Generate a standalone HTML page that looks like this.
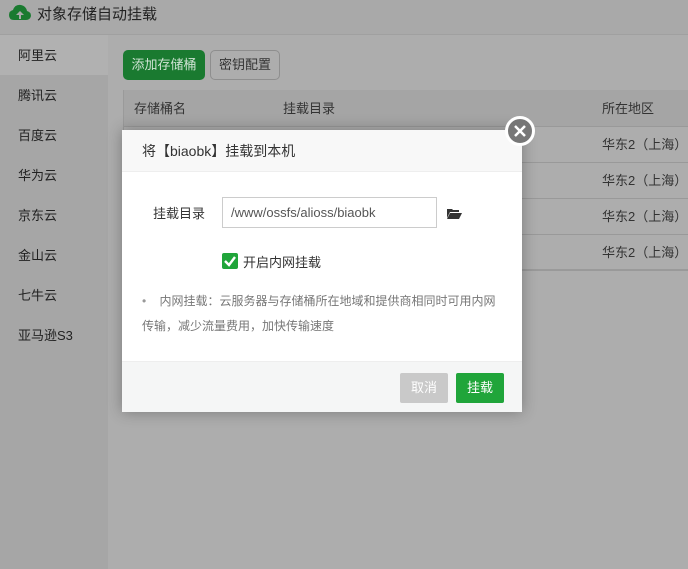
<!DOCTYPE html><html><head><meta charset="utf-8"><style>
*{margin:0;padding:0;box-sizing:border-box}
body{width:688px;height:569px;overflow:hidden;position:relative;background:#adadad;font-family:"Liberation Sans","Noto Sans CJK SC",sans-serif;font-size:13px;color:#333}
.a{position:absolute}
.top{left:0;top:0;width:688px;height:35px;background:#a9a9a9;border-bottom:1px solid #a0a0a0}
.side{left:0;top:35px;width:108px;height:534px;background:#a6a6a6}
.si{position:absolute;left:18px;font-size:13px;color:#222}
.tab{left:123px;top:90px;width:565px;height:180px;border:1px solid #9a9a9a;border-right:none}
.row{position:absolute;left:0;width:565px;height:36px;border-top:1px solid #999}
.t{position:absolute;font-size:13px;color:#333}
</style></head><body>
<div class="a top"></div>
<svg class="a" style="left:9px;top:4px" width="22" height="18" viewBox="0 0 22 18"><path d="M5 16 Q0 16 0 11 Q0 7 4 6 Q6 0 12 1 Q17 2 18 7 Q22 8 22 12 Q21 16 17 16Z" fill="#1a7a30"/><path d="M11 7 L7 11 H10 V15 H12 V11 H15Z" fill="#a9a9a9"/></svg>
<div class="a" style="left:37px;top:3px;font-size:15px;color:#222">对象存储自动挂载</div>
<div class="a side"></div>
<div class="a" style="left:0;top:35px;width:108px;height:40px;background:#b1b1b1"></div>
<div class="si" style="top:45px">阿里云</div>
<div class="si" style="top:85px">腾讯云</div>
<div class="si" style="top:125px">百度云</div>
<div class="si" style="top:165px">华为云</div>
<div class="si" style="top:205px">京东云</div>
<div class="si" style="top:245px">金山云</div>
<div class="si" style="top:285px">七牛云</div>
<div class="si" style="top:325px">亚马逊S3</div>
<div class="a" style="left:123px;top:50px;width:82px;height:30px;background:#1a7a30;border-radius:5px;color:#cfe3d3;text-align:center;line-height:30px">添加存储桶</div>
<div class="a" style="left:210px;top:50px;width:70px;height:30px;border:1px solid #8e8e8e;border-radius:5px;color:#333;text-align:center;line-height:28px">密钥配置</div>
<div class="a tab">
<div class="row" style="top:-1px;height:36px;background:#a5a5a5;border-top:none"></div>
<div class="t" style="left:10px;top:7px">存储桶名</div><div class="t" style="left:159px;top:7px">挂载目录</div><div class="t" style="left:478px;top:7px">所在地区</div>
<div class="row" style="top:35px"><div class="t" style="left:478px;top:7px">华东2（上海）</div></div>
<div class="row" style="top:71px"><div class="t" style="left:478px;top:7px">华东2（上海）</div></div>
<div class="row" style="top:107px"><div class="t" style="left:478px;top:7px">华东2（上海）</div></div>
<div class="row" style="top:143px;height:37px;border-bottom:1px solid #999"><div class="t" style="left:478px;top:7px">华东2（上海）</div></div>
</div>
<div class="a" style="left:122px;top:130px;width:400px;height:282px;background:#fff;box-shadow:0 0 14px rgba(0,0,0,.3)">
<div class="a" style="left:0;top:0;width:400px;height:42px;background:#f8f8f8;border-bottom:1px solid #eee"></div>
<div class="a" style="left:20px;top:11px;font-size:14px;color:#333">将【biaobk】挂载到本机</div>
<div class="a" style="left:31px;top:73px;color:#333">挂载目录</div>
<div class="a" style="left:100px;top:67px;width:215px;height:31px;border:1px solid #ccc;padding-left:8px;line-height:29px;color:#555">/www/ossfs/alioss/biaobk</div>
<svg class="a" style="left:325px;top:78px" width="15" height="11" viewBox="0 0 15 11"><path d="M0 1 H5 L6 2 H12 V4 H3 L0 10Z M3 5 H15 L12 11 H0Z" fill="#333"/></svg>
<div class="a" style="left:100px;top:123px;width:16px;height:16px;background:#20a53a;border-radius:2px"><svg width="16" height="16"><path d="M3 8 L7 12 L13 4" stroke="#fff" stroke-width="2.4" fill="none"/></svg></div>
<div class="a" style="left:121px;top:122px;color:#333">开启内网挂载</div>
<div class="a" style="left:20px;top:159px;width:360px;font-size:12px;color:#777;line-height:25px"><span style="color:#999;margin-right:10px">•</span> 内网挂载：云服务器与存储桶所在地域和提供商相同时可用内网传输，减少流量费用，加快传输速度</div>
<div class="a" style="left:0;top:231px;width:400px;height:51px;background:#f5f6f6;border-top:1px solid #eee"></div>
<div class="a" style="left:278px;top:243px;width:48px;height:30px;background:#c9c9c9;border-radius:2px;color:#fff;text-align:center;line-height:30px">取消</div>
<div class="a" style="left:334px;top:243px;width:48px;height:30px;background:#20a53a;border-radius:2px;color:#fff;text-align:center;line-height:30px">挂载</div>
</div>
<div class="a" style="left:505px;top:116px;width:30px;height:30px;border-radius:50%;background:#777;border:3px solid #fff"><svg width="24" height="24"><path d="M7 7 L17 17 M17 7 L7 17" stroke="#fff" stroke-width="2.5"/></svg></div>
</body></html>
